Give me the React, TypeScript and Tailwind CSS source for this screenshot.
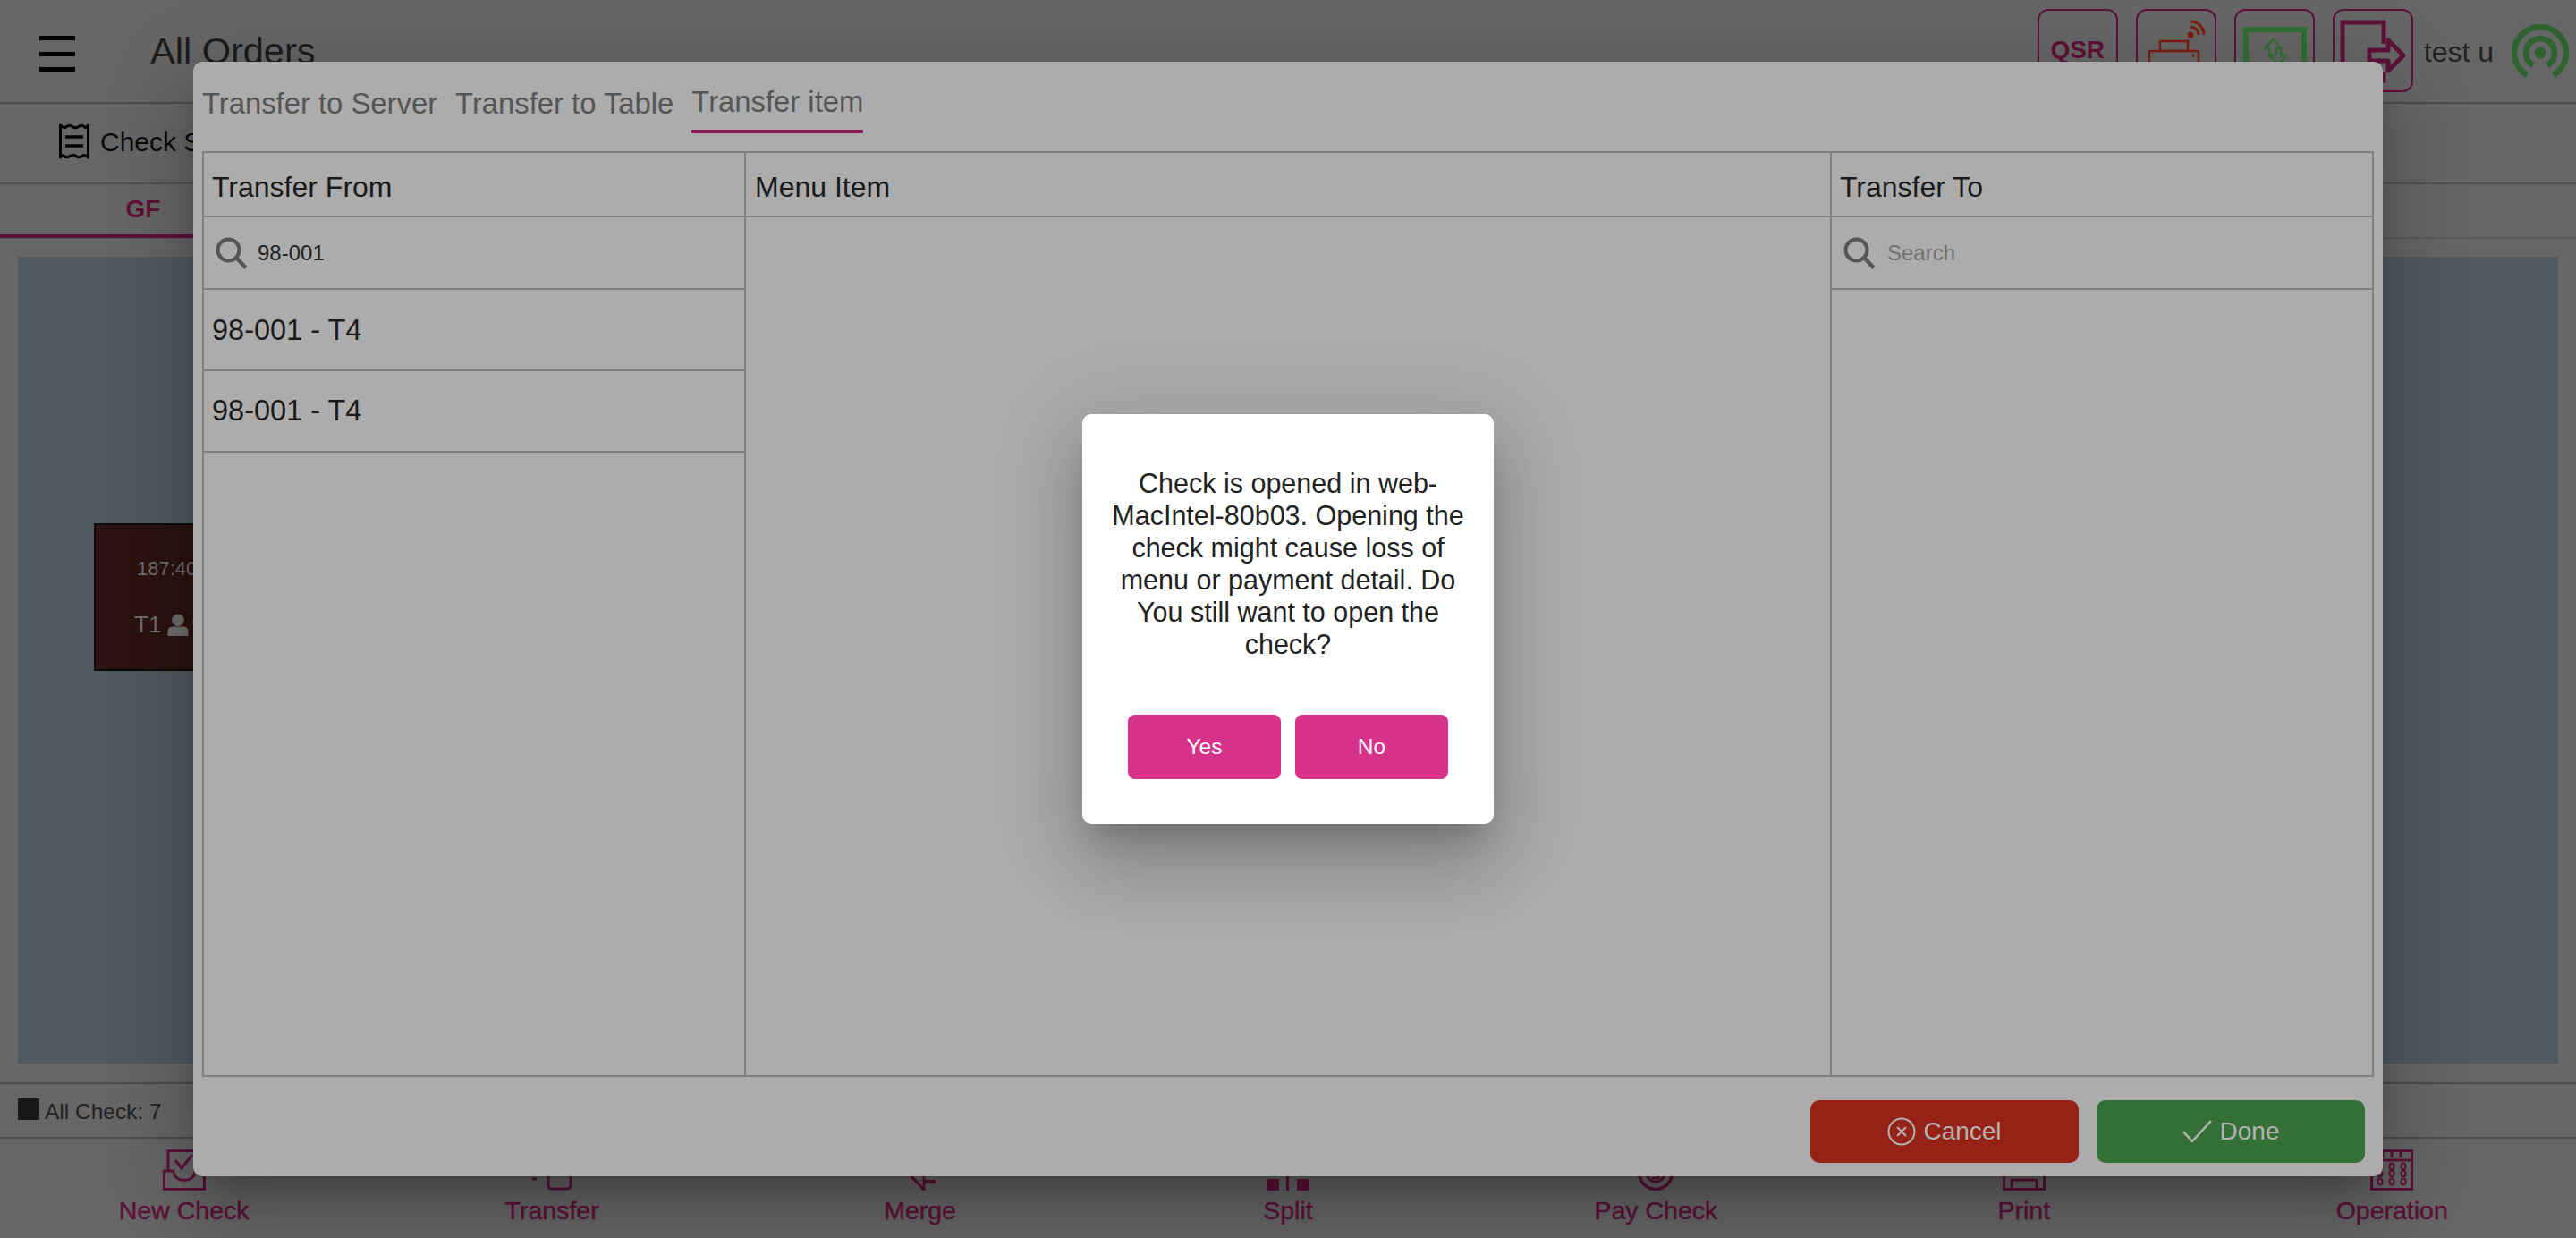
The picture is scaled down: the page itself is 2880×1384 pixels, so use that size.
import React from "react";

const PINK = "#5e1238";

function Burger() {
  return (
    <div className="flex flex-col justify-between w-10 h-10">
      <div className="h-[5px] bg-black" />
      <div className="h-[5px] bg-black" />
      <div className="h-[5px] bg-black" />
    </div>
  );
}

function HeaderBox({ children }: { children: React.ReactNode }) {
  return (
    <div className="relative w-[90px] h-[93px] rounded-[12px] border-2 border-[#5e1238] overflow-hidden">{children}</div>
  );
}

function ReceiptIcon() {
  return (
    <svg width="34" height="40" viewBox="0 0 34 40" fill="none" stroke="#000" strokeWidth="3">
      <path d="M1.5 2 Q5 6 8.5 3.5 T15 3.5 T22 3.5 T28 3.5 T32.5 2 V38 Q29 34 25.5 36.5 T19 36.5 T12 36.5 T6 36.5 T1.5 38 Z" strokeLinejoin="round" />
      <path d="M7 15H27M7 25H27" strokeWidth="3.5" />
    </svg>
  );
}

function SearchIcon() {
  return (
    <svg width="36" height="36" viewBox="0 0 36 36" fill="none" stroke="#555" strokeWidth="4">
      <circle cx="14.5" cy="14.5" r="12" />
      <path d="M23 23L34 34.5" strokeWidth="4.5" />
    </svg>
  );
}

function NavIcon({ name }: { name: string }) {
  const common = { width: 48, height: 46, viewBox: "0 0 48 46", fill: "none", stroke: PINK, strokeWidth: 3 };
  if (name === "New Check")
    return (
      <svg {...common}>
        <path d="M6 24V1.5H42V24" />
        <path d="M14 12L21 21L33 6" strokeWidth="3" />
        <path d="M1.5 24H12C12 38 36 38 36 24H46.5V44.5H1.5Z" />
      </svg>
    );
  if (name === "Transfer")
    return (
      <svg {...common}>
        <path d="M2 33H7" strokeWidth="3" />
        <path d="M20 20V40Q20 44 24 44H41Q45 44 45 40V20H20Z" />
      </svg>
    );
  if (name === "Merge")
    return (
      <svg {...common}>
        <path d="M10 26L28 45V6" strokeWidth="3" />
        <path d="M28 36H41" strokeWidth="4" />
      </svg>
    );
  if (name === "Split")
    return (
      <svg {...common} fill={PINK} stroke="none">
        <rect x="0" y="33" width="14" height="13" />
        <rect x="22" y="25" width="3" height="21" />
        <rect x="34" y="33" width="14" height="13" />
      </svg>
    );
  if (name === "Pay Check")
    return (
      <svg {...common}>
        <circle cx="24" cy="26" r="18.5" strokeWidth="3.5" />
        <circle cx="24" cy="26" r="10" strokeWidth="3" />
        <path d="M20 32H27V24" strokeWidth="2.5" />
      </svg>
    );
  if (name === "Print")
    return (
      <svg {...common}>
        <path d="M1.5 20V44.5H46.5V20" strokeWidth="3" />
        <path d="M10 44V34H38V44" strokeWidth="3" />
      </svg>
    );
  return (
    <svg {...common}>
      <rect x="1.5" y="1.5" width="45" height="43" strokeWidth="3" />
      <path d="M1.5 12H46.5" strokeWidth="3" />
      <path d="M14 2V9M24 2V9M34 2V9" strokeWidth="3" />
      {[19, 27, 36].map((y) =>
        [11, 24, 37].map((x) => (
          <ellipse key={`${x}-${y}`} cx={x} cy={y} rx="2.5" ry="3.4" strokeWidth="2" />
        ))
      )}
    </svg>
  );
}

function NavItem({ name }: { name: string }) {
  return (
    <div className="flex-1 flex flex-col items-center pt-[12px]">
      <NavIcon name={name} />
      <div className="mt-[5px] text-[28.5px] leading-[34px] text-[#5e1238] [-webkit-text-stroke:0.5px_#5e1238]">{name}</div>
    </div>
  );
}

function Page() {
  return (
    <div className="w-[2880px] h-[1384px] flex flex-col bg-[#666666] overflow-hidden">
      <header className="h-[116px] shrink-0 border-b-2 border-[#4c4c4c] flex items-start">
        <div className="ml-[44px] mt-[40px]">
          <Burger />
        </div>
        <div className="ml-[84px] mt-[33px] text-[41.5px] leading-[48px] text-[#1c1c1c]">All Orders</div>
        <div className="ml-auto flex items-start mt-[10px] mr-[8px]">
          <div className="flex gap-[20px]">
            <HeaderBox>
              <div className="text-center mt-[24px] text-[28px] leading-[40px] font-bold text-[#5e1238]">QSR</div>
            </HeaderBox>
            <HeaderBox>
              <svg width="86" height="89" viewBox="0 0 86 89" fill="none" stroke="#7d1e12" strokeWidth="2.5">
                <circle cx="59" cy="27" r="3.5" fill="#7d1e12" stroke="none" />
                <path d="M59 18A9 9 0 0 1 68 27" strokeWidth="3" />
                <path d="M59 12A15 15 0 0 1 74 27" strokeWidth="3" />
                <rect x="25" y="34" width="31" height="11" />
                <rect x="13" y="45" width="55" height="34" rx="2" />
                <circle cx="62" cy="50" r="1.5" fill="#7d1e12" stroke="none" />
              </svg>
            </HeaderBox>
            <HeaderBox>
              <svg width="86" height="89" viewBox="0 0 86 89" fill="none">
                <rect x="11" y="21" width="65" height="62" stroke="#307034" strokeWidth="6" />
                <path d="M37 52V42H32L41 32L50 42H45V49" stroke="#307034" strokeWidth="2.5" strokeLinejoin="round" />
                <path d="M50 40V50H56L47 60L38 50H43" stroke="#307034" strokeWidth="2.5" strokeLinejoin="round" />
              </svg>
            </HeaderBox>
            <HeaderBox>
              <svg width="86" height="89" viewBox="0 0 86 89" fill="none" stroke="#5e1238">
                <path d="M55 37V13H9V78H55V68" strokeWidth="5" />
                <path d="M39 44H60V33L77 50L60 67V56H39Z" strokeWidth="5" strokeLinejoin="round" />
              </svg>
            </HeaderBox>
          </div>
          <div className="ml-[12px] mt-[29px] text-[32px] leading-[38px] text-[#222]">test u</div>
          <svg className="ml-[20px] mt-[17px]" width="64" height="64" viewBox="0 0 64 64" fill="none" stroke="#2e6330" strokeWidth="6.5">
            <path d="M17.5 57.1A29 29 0 1 1 46.5 57.1" />
            <path d="M24 45.9A16 16 0 1 1 40 45.9" />
            <circle cx="32" cy="32" r="6.5" fill="#2e6330" stroke="none" />
          </svg>
        </div>
      </header>
      <div className="h-[90px] shrink-0 border-b-2 border-[#505050] flex items-center pl-[66px] pb-[4px]">
        <ReceiptIcon />
        <span className="ml-[12px] text-[30px] text-[#0a0a0a]">Check Status</span>
      </div>
      <div className="h-[61px] shrink-0 border-b-2 border-[#5a5a5a] relative">
        <div className="w-[320px] h-[60px] border-b-4 border-[#5e1238] flex items-center justify-center text-[28px] font-bold text-[#5e1238]">
          GF
        </div>
      </div>
      <main className="flex-1 min-h-0 p-[20px] pb-[21px]">
        <div className="relative h-full bg-[#4f5a60]">
          <div className="absolute left-[85px] top-[298px] w-[300px] h-[165px] bg-[#2b1310] border-2 border-[#0c0c0c] text-[#6e6e6e]">
            <div className="absolute left-[46px] top-[36px] text-[22px] leading-[26px]">187:40</div>
            <div className="absolute left-[43px] top-[96px] flex items-center text-[26px] leading-[30px]">
              <span>T1</span>
              <svg className="ml-[6px]" width="26" height="25" viewBox="0 0 24 24" fill="#6e6e6e">
                <circle cx="12" cy="7" r="6.5" />
                <path d="M1 24V19Q1 14 7 14H17Q23 14 23 19V24Z" />
              </svg>
              <span className="ml-[2px]">9</span>
            </div>
          </div>
        </div>
      </main>
      <div className="h-[63px] shrink-0 border-t-2 border-b-2 border-[#4c4c4c] flex items-center pl-[20px] pt-[4px] text-[24.5px] text-[#222]">
        <div className="w-[24px] h-[24px] bg-[#181818] -mt-[8px]" />
        <span className="ml-[6px]">All Check: 7</span>
      </div>
      <nav className="h-[111px] shrink-0 flex">
        {["New Check", "Transfer", "Merge", "Split", "Pay Check", "Print", "Operation"].map((n) => (
          <NavItem key={n} name={n} />
        ))}
      </nav>
    </div>
  );
}

function Transfer() {
  const cell = "border-b-2 border-[#808080]";
  return (
    <div className="absolute left-[216px] top-[69px] w-[2448px] h-[1246px] rounded-[10px] bg-[#acacac] flex flex-col overflow-hidden shadow-[0_22px_30px_-14px_rgba(0,0,0,0.2),0_48px_76px_6px_rgba(0,0,0,0.14),0_18px_92px_16px_rgba(0,0,0,0.12)]">
      <div className="h-[100px] shrink-0 pl-[10px] flex gap-[20px] text-[32.8px] text-[#555]">
        <div className="h-[80px] flex items-center pt-[14px]">Transfer to Server</div>
        <div className="h-[80px] flex items-center pt-[14px]">Transfer to Table</div>
        <div className="h-[80px] flex items-center pt-[14px] border-b-4 border-[#8d1f5e]">Transfer item</div>
      </div>
      <div className="mx-[10px] flex-1 border-2 border-[#808080] grid grid-cols-[604px_1fr_604px] text-[32px] text-[#1a1a1a]">
        <div className="flex flex-col">
          <div className={`h-[72px] flex items-center pl-[9px] pt-[6px] ${cell}`}>Transfer From</div>
          <div className={`h-[81px] flex items-center pl-[13px] pt-[1px] ${cell}`}>
            <SearchIcon />
            <span className="ml-[11px] text-[24px] text-[#222]">98-001</span>
          </div>
          <div className={`h-[91px] flex items-center pl-[9px] pt-[2px] text-[32.5px] ${cell}`}>98-001 - T4</div>
          <div className={`h-[91px] flex items-center pl-[9px] text-[32.5px] ${cell}`}>98-001 - T4</div>
        </div>
        <div className="flex flex-col border-l-2 border-r-2 border-[#808080]">
          <div className={`h-[72px] flex items-center pl-[10px] pt-[6px] ${cell}`}>Menu Item</div>
        </div>
        <div className="flex flex-col">
          <div className={`h-[72px] flex items-center pl-[9px] pt-[6px] ${cell}`}>Transfer To</div>
          <div className={`h-[81px] flex items-center pl-[13px] pt-[1px] ${cell}`}>
            <SearchIcon />
            <span className="ml-[13px] text-[24px] text-[#717171]">Search</span>
          </div>
        </div>
      </div>
      <div className="h-[111px] shrink-0 flex justify-end gap-[20px] pr-[20px] pt-[26px] text-[28px] text-[#b3b3b3]">
        <div className="w-[300px] h-[70px] rounded-[10px] bg-[#962117] flex items-center justify-center">
          <svg width="32" height="32" viewBox="0 0 32 32" fill="none" stroke="#b3b3b3" strokeWidth="2">
            <circle cx="16" cy="16" r="14.5" />
            <path d="M11 11L21 21M21 11L11 21" />
          </svg>
          <span className="ml-[8px]">Cancel</span>
        </div>
        <div className="w-[300px] h-[70px] rounded-[10px] bg-[#347036] flex items-center justify-center">
          <svg width="34" height="26" viewBox="0 0 34 26" fill="none" stroke="#b3b3b3" strokeWidth="2.5">
            <path d="M1 13L11 24L32 1" />
          </svg>
          <span className="ml-[8px]">Done</span>
        </div>
      </div>
    </div>
  );
}

function Alert() {
  return (
    <div className="absolute inset-0 flex items-center justify-center">
      <div className="w-[460px] h-[458px] rounded-[10px] bg-white px-[28px] pt-[59px] flex flex-col items-center shadow-[0_22px_30px_-14px_rgba(0,0,0,0.2),0_48px_76px_6px_rgba(0,0,0,0.14),0_18px_92px_16px_rgba(0,0,0,0.12)]">
        <p className="text-center text-[30.5px] leading-[36px] text-[#222]">
          Check is opened in web-MacIntel-80b03. Opening the check might cause loss of menu or payment detail. Do You still want to open the check?
        </p>
        <div className="flex gap-[16px] mt-[61px]">
          <div className="w-[171px] h-[72px] rounded-[8px] bg-[#d63289] text-white text-[24.5px] flex items-center justify-center">Yes</div>
          <div className="w-[171px] h-[72px] rounded-[8px] bg-[#d63289] text-white text-[24.5px] flex items-center justify-center">No</div>
        </div>
      </div>
    </div>
  );
}

export default function App() {
  return (
    <div className="relative w-[2880px] h-[1384px] overflow-hidden font-['Liberation_Sans',Arial,sans-serif]">
      <Page />
      <Transfer />
      <Alert />
    </div>
  );
}
